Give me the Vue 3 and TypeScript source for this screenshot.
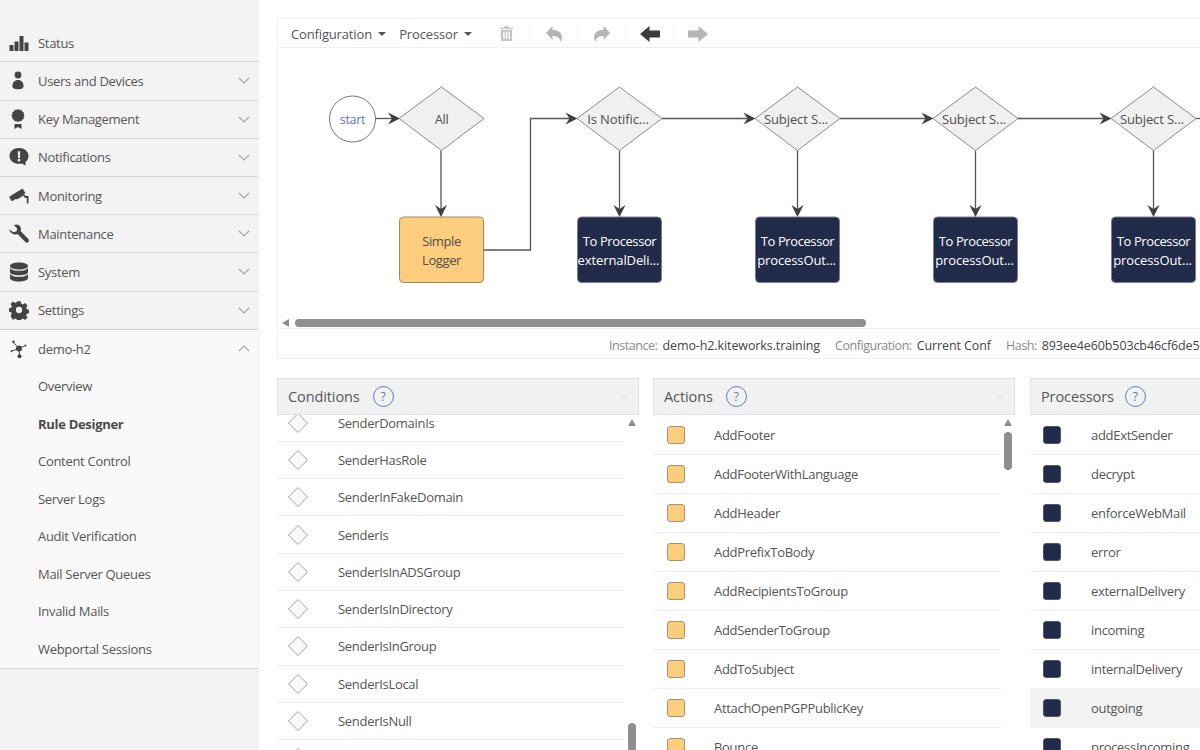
<script setup lang="ts">
interface NavItem {
  label: string;
  icon: string;
  chevron?: boolean;
}

const navItems: NavItem[] = [
  { label: 'Status', icon: 'status' },
  { label: 'Users and Devices', icon: 'user', chevron: true },
  { label: 'Key Management', icon: 'badge', chevron: true },
  { label: 'Notifications', icon: 'bubble', chevron: true },
  { label: 'Monitoring', icon: 'camera', chevron: true },
  { label: 'Maintenance', icon: 'wrench', chevron: true },
  { label: 'System', icon: 'database', chevron: true },
  { label: 'Settings', icon: 'gear', chevron: true },
];

const subItems = [
  'Overview',
  'Rule Designer',
  'Content Control',
  'Server Logs',
  'Audit Verification',
  'Mail Server Queues',
  'Invalid Mails',
  'Webportal Sessions',
];

const conditions = [
  'SenderDomainIs',
  'SenderHasRole',
  'SenderInFakeDomain',
  'SenderIs',
  'SenderIsInADSGroup',
  'SenderIsInDirectory',
  'SenderIsInGroup',
  'SenderIsLocal',
  'SenderIsNull',
  'SenderIsRegex',
];

const actions = [
  'AddFooter',
  'AddFooterWithLanguage',
  'AddHeader',
  'AddPrefixToBody',
  'AddRecipientsToGroup',
  'AddSenderToGroup',
  'AddToSubject',
  'AttachOpenPGPPublicKey',
  'Bounce',
];

const processors = [
  'addExtSender',
  'decrypt',
  'enforceWebMail',
  'error',
  'externalDelivery',
  'incoming',
  'internalDelivery',
  'outgoing',
  'processIncoming',
];

// diagram columns after the first one
const branches = [
  { x: 619.5, label: 'Is Notific...', target: 'externalDeli...' },
  { x: 797.5, label: 'Subject S...', target: 'processOut...' },
  { x: 975.5, label: 'Subject S...', target: 'processOut...' },
  { x: 1153.5, label: 'Subject S...', target: 'processOut...' },
];

const diamondPoints = (cx: number) =>
  `${cx - 42.5},118.5 ${cx},87 ${cx + 42.5},118.5 ${cx},150.5`;

const arrowHead = (x: number, y: number) =>
  `${x},${y} ${x - 12},${y - 6} ${x - 8},${y} ${x - 12},${y + 6}`;

const downHead = (x: number, y: number) =>
  `${x},${y} ${x - 6},${y - 12} ${x},${y - 8} ${x + 6},${y - 12}`;
</script>

<template>
  <div class="app">
    <aside class="sidebar">
      <nav class="nav">
        <div v-for="item in navItems" :key="item.label" class="nav-row">
          <svg class="nav-icon" viewBox="0 0 20 20" fill="#444">
            <template v-if="item.icon === 'status'">
              <rect x="0.5" y="12" width="4" height="6" />
              <rect x="5.5" y="8.5" width="4" height="9.5" />
              <rect x="10.5" y="3" width="4" height="15" />
              <rect x="15.5" y="9.5" width="4" height="8.5" />
            </template>
            <template v-else-if="item.icon === 'user'">
              <circle cx="9" cy="4" r="3.4" />
              <path d="M9 9c-3.400 0-5.600 2.600-5.600 6 0 2 1.600 3.300 5.600 3.300s5.600-1.300 5.600-3.300c0-3.400-2.200-6-5.600-6z" />
            </template>
            <template v-else-if="item.icon === 'badge'">
              <path d="M10 0l1.800 1.100 2.100-.2 1 1.900 1.900 1-.2 2.100 1.100 1.800-1.100 1.800.2 2.100-1.900 1-1 1.900-2.100-.2-1.800 1.100-1.800-1.100-2.100.2-1-1.900-1.900-1 .2-2.100-1.100-1.800 1.100-1.800-.2-2.100 1.900-1 1-1.900 2.100.2z" transform="translate(.5 0) scale(.85)" />
              <path d="M5.500 15h7v5l-3.500-2-3.500 2z" />
            </template>
            <template v-else-if="item.icon === 'bubble'">
              <path fill-rule="evenodd" d="M10 1c5.500 0 9.500 3.400 9.500 8 0 2.500-1.100 4.500-3 6v3.500L12.800 16.500c-.9.2-1.800.3-2.800.3C4.500 16.800.5 13.500.5 9S4.500 1 10 1zM8.800 4.200l.3 6.800h1.800l.3-6.800zM10 11.800a1.400 1.400 0 100 2.800 1.400 1.400 0 000-2.800z" />
            </template>
            <template v-else-if="item.icon === 'camera'">
              <path d="M.5 10.500L13.500 2.500l3 4.500L3.500 15 2 14.500l-1.500-3z" />
              <path d="M8 13.500l6.500-3.800 1.500 2.300h1.800v5.500h1.700v-7.500h-3L15 8 6.500 12.500z" />
            </template>
            <template v-else-if="item.icon === 'wrench'">
              <path d="M.6 5.200L4 8.200 7.400 7.600 8.200 4.400 5 1.200C7.800-.2 11 1 11.800 3.800c.3 1.200.2 2.300-.3 3.300l7.900 7.900c.8.900.8 2.200 0 3s-2.200.9-3 0L8.500 10c-1.300.7-2.800.8-4.200.2C1.900 9.200.4 7.600.6 5.200z" />
            </template>
            <template v-else-if="item.icon === 'database'">
              <path d="M10 .5c5 0 9 1.400 9 3.500S15 7.500 10 7.500 1 6.100 1 4 5 .5 10 .5z" />
              <path d="M1 6c1.400 2 5 2.800 9 2.800S17.600 8 19 6v4c0 2-4 3.300-9 3.300S1 12 1 10z" />
              <path d="M1 12c1.400 2 5 2.800 9 2.800s7.600-.8 9-2.800v4c0 2.100-4 3.500-9 3.500S1 18.100 1 16z" />
            </template>
            <template v-else-if="item.icon === 'gear'">
              <path fill-rule="evenodd" d="M8 .3h4l.6 2.800 1.700.7 2.400-1.500 2.800 2.800-1.500 2.400.7 1.700 2.800.6v3.700l-2.800.6-.7 1.700 1.500 2.400-2.800 2.800-2.400-1.500-1.700.7-.6 2.800H8l-.6-2.800-1.700-.7-2.400 1.500L.5 16.500 2 14.100l-.7-1.700-2.800-.6V8.100l2.800-.6.7-1.700L.5 3.400l2.800-2.800 2.400 1.500 1.700-.7zM10 6.500a3.500 3.500 0 100 7 3.500 3.500 0 000-7z" transform="translate(1 1) scale(.9)" />
            </template>
          </svg>
          <span class="nav-label">{{ item.label }}</span>
          <svg v-if="item.chevron" class="chevron" viewBox="0 0 12 7">
            <path d="M1 1l5 5 5-5" />
          </svg>
        </div>

        <div class="nav-group">
          <div class="nav-row nav-row--open">
            <svg class="nav-icon" viewBox="0 0 20 20" fill="#444" stroke="#444">
              <path d="M10 9.500L4.500 3.500M10 9.500L16.500 6.500M10 9.500L3 12M10 9.500L10.500 17" stroke-width="1" />
              <circle cx="10" cy="9.500" r="3" stroke="none" />
              <circle cx="4.500" cy="2.800" r="1.300" stroke="none" />
              <circle cx="16.500" cy="6.500" r="1" stroke="none" />
              <circle cx="2.500" cy="12.200" r="1" stroke="none" />
              <circle cx="10.500" cy="17.200" r="2" stroke="none" />
            </svg>
            <span class="nav-label">demo-h2</span>
            <svg class="chevron" viewBox="0 0 12 7">
              <path d="M1 6l5-5 5 5" />
            </svg>
          </div>
          <a
            v-for="sub in subItems"
            :key="sub"
            class="sub-item"
            :class="{ 'sub-item--active': sub === 'Rule Designer' }"
          >{{ sub }}</a>
        </div>
      </nav>
    </aside>

    <main class="main">
      <section class="designer">
        <div class="toolbar">
          <div class="menus">
            <span class="menu">Configuration <i class="caret"></i></span>
            <span class="menu">Processor <i class="caret"></i></span>
          </div>
          <button class="tool">
            <svg viewBox="0 0 14 16" width="13" height="15" fill="#c4c4c4">
              <path d="M5 0h4l.6 1.500H14V3H0V1.500h4.400z" />
              <path fill-rule="evenodd" d="M1 4h12v12H1zM3.500 6v8h1.500V6zm2.800 0v8h1.500V6zm2.800 0v8h1.500V6z" />
            </svg>
          </button>
          <button class="tool">
            <svg viewBox="0 0 16 16" width="16" height="16" fill="#b5b5b5">
              <path d="M6.500 0v3.800c5.500 0 9.500 3 9.500 7.500 0 1.900-.7 3.500-1.800 4.700.4-3.500-2.400-6-7.700-6V14L0 7z" />
            </svg>
          </button>
          <button class="tool">
            <svg viewBox="0 0 16 16" width="16" height="16" fill="#b5b5b5">
              <path d="M9.500 0v3.800C4 3.800 0 6.800 0 11.300 0 13.200.7 14.800 1.800 16c-.4-3.500 2.400-6 7.700-6V14L16 7z" />
            </svg>
          </button>
          <button class="tool">
            <svg viewBox="0 0 20 16" width="20" height="16" fill="#3c3c3c">
              <path d="M0 8l9.500-8v4.500H20v7H9.500V16z" />
            </svg>
          </button>
          <button class="tool tool--last">
            <svg viewBox="0 0 20 16" width="20" height="16" fill="#b5b5b5">
              <path d="M20 8l-9.500-8v4.500H0v7h10.500V16z" />
            </svg>
          </button>
        </div>

        <div class="canvas">
          <svg class="diagram" viewBox="278 48 922 266">
            <g class="links">
              <path d="M376 118.500H392" />
              <path d="M441 150.500V210" />
              <path d="M484 250H530.500V118.500H570" />
              <path v-for="(b, i) in branches.slice(0, 3)" :key="i" :d="`M${b.x + 42.5} 118.500H${branches[i + 1].x - 50}`" />
              <path d="M1196 118.500H1200" />
              <path v-for="b in branches" :key="b.x" :d="`M${b.x} 150.500V210`" />
            </g>
            <g fill="#3f3f3f">
              <polygon :points="arrowHead(400, 118.5)" />
              <polygon :points="downHead(441, 217)" />
              <polygon :points="arrowHead(577.5, 118.5)" />
              <polygon v-for="b in branches.slice(1)" :key="b.x" :points="arrowHead(b.x - 42, 118.5)" />
              <polygon v-for="b in branches" :key="b.x" :points="downHead(b.x, 217)" />
            </g>

            <circle class="start" cx="352.500" cy="119" r="23" />
            <text class="start-label" x="352.500" y="124">start</text>

            <polygon class="decision" :points="diamondPoints(441.5)" />
            <text class="node-text" x="441.500" y="123.500">All</text>

            <rect class="logger" x="399.500" y="217" width="84" height="65.500" rx="4" />
            <text class="node-text" x="441.500" y="246">Simple</text>
            <text class="node-text" x="441.500" y="265">Logger</text>

            <g v-for="b in branches" :key="b.x">
              <polygon class="decision" :points="diamondPoints(b.x)" />
              <text class="node-text node-text--wide" :x="b.x - 1.5" y="123.500">{{ b.label }}</text>
              <rect class="target" :x="b.x - 42" y="217" width="84" height="65.500" rx="4" />
              <text class="node-text node-text--light" :x="b.x" y="246">To Processor</text>
              <text class="node-text node-text--light node-text--wide" :x="b.x - 1" y="265">{{ b.target }}</text>
            </g>
          </svg>
          <div class="h-scroll">
            <i class="arrow-left"></i>
            <div class="h-thumb"></div>
          </div>
        </div>

        <div class="info">
          <span class="info-key">Instance:</span><span class="info-val">demo-h2.kiteworks.training</span>
          <span class="info-key">Configuration:</span><span class="info-val">Current Conf</span>
          <span class="info-key">Hash:</span><span class="info-val">893ee4e60b503cb46cf6de5e1a</span>
        </div>
      </section>

      <section class="panels">
        <div class="panel">
          <header class="panel-head">
            Conditions <span class="help">?</span>
            <svg class="chevron chevron--faint" viewBox="0 0 12 7"><path d="M1 1l5 5 5-5" /></svg>
          </header>
          <div class="panel-body">
            <ul class="list list--conditions">
              <li v-for="c in conditions" :key="c" class="row row--condition">
                <svg class="swatch-diamond" viewBox="0 0 22 22"><path d="M11 1.500L20.500 11 11 20.500 1.500 11z" /></svg>
                <span>{{ c }}</span>
              </li>
            </ul>
            <i class="arrow-up"></i>
            <div class="v-thumb v-thumb--low"></div>
          </div>
        </div>

        <div class="panel">
          <header class="panel-head">
            Actions <span class="help">?</span>
            <svg class="chevron chevron--faint" viewBox="0 0 12 7"><path d="M1 1l5 5 5-5" /></svg>
          </header>
          <div class="panel-body">
            <ul class="list">
              <li v-for="a in actions" :key="a" class="row">
                <i class="swatch swatch--action"></i>
                <span>{{ a }}</span>
              </li>
            </ul>
            <i class="arrow-up"></i>
            <div class="v-thumb"></div>
          </div>
        </div>

        <div class="panel panel--processors">
          <header class="panel-head">
            Processors <span class="help">?</span>
          </header>
          <div class="panel-body">
            <ul class="list list--full">
              <li
                v-for="p in processors"
                :key="p"
                class="row"
                :class="{ 'row--hover': p === 'outgoing' }"
              >
                <i class="swatch swatch--processor"></i>
                <span>{{ p }}</span>
              </li>
            </ul>
          </div>
        </div>
      </section>
    </main>
  </div>
</template>

<style>
html,
body {
  margin: 0;
  height: 100%;
  overflow: hidden;
}
</style>

<style scoped>
.app {
  display: flex;
  width: 1200px;
  height: 750px;
  overflow: hidden;
  background: #fff;
  color: #555;
  font-family: "Open Sans", "Liberation Sans", sans-serif;
  font-size: 13px;
  letter-spacing: -0.3px;
}

.sidebar {
  flex: 0 0 258px;
  background: #f3f3f3;
  box-shadow: 1px 0 1px rgba(0, 0, 0, 0.06);
  padding-top: 24.2px;
  box-sizing: border-box;
  position: relative;
  z-index: 1;
}

.nav-row {
  display: flex;
  align-items: center;
  height: 38.2px;
  box-sizing: border-box;
  border-bottom: 1px solid #d6d6d6;
  padding: 0 8px 0 9px;
}

.nav-row--open {
  height: 37.7px;
  border-bottom: 0;
}

.nav-icon {
  width: 20px;
  height: 20px;
  flex: none;
  margin-right: 9px;
}

.nav-label {
  flex: 1;
}

.chevron {
  width: 12px;
  height: 7px;
  fill: none;
  stroke: #a5a5a5;
  stroke-width: 1.2;
}

.chevron--faint {
  stroke: #e6e6e6;
  margin-left: auto;
  margin-right: 8px;
}

.nav-group {
  background: #f9f9f9;
  border-bottom: 1px solid #d6d6d6;
  padding-bottom: 1px;
}

.sub-item {
  display: flex;
  align-items: center;
  height: 37.5px;
  padding-left: 38px;
}

.sub-item--active {
  font-weight: 700;
  color: #4a4a4a;
}

.main {
  flex: 1;
  min-width: 0;
  overflow: hidden;
  padding: 18px 0 0 19px;
  box-sizing: border-box;
}

.designer {
  width: 1000px;
  height: 341px;
  box-sizing: border-box;
  border: 1px solid #f0f0f0;
  display: flex;
  flex-direction: column;
}

.toolbar {
  display: flex;
  align-items: center;
  height: 27px;
  padding-top: 1px;
  flex: none;
  border-bottom: 1px solid #f0f0f0;
}

.menus {
  display: flex;
  gap: 13px;
  width: 204px;
  padding-left: 13px;
  box-sizing: border-box;
  color: #555;
  letter-spacing: -0.15px;
}

.menu {
  white-space: nowrap;
}

.caret {
  display: inline-block;
  border-left: 4px solid transparent;
  border-right: 4px solid transparent;
  border-top: 4px solid #555;
  vertical-align: 3px;
  margin-left: 3px;
}

.tool {
  width: 48px;
  height: 27px;
  border: 0;
  background: none;
  padding: 0;
  display: flex;
  align-items: center;
  justify-content: center;
  position: relative;
}

.tool::after {
  content: "";
  position: absolute;
  right: 0;
  top: 2px;
  bottom: 2px;
  width: 1px;
  background: #f6f6f6;
}

.tool--last::after {
  display: none;
}

.canvas {
  position: relative;
  height: 280px;
  flex: none;
  border-bottom: 1px solid #f0f0f0;
  overflow: hidden;
}

.diagram {
  display: block;
  width: 922px;
  height: 266px;
}

.links path {
  fill: none;
  stroke: #555;
  stroke-width: 1.3;
}

.start {
  fill: #fff;
  stroke: #777;
}

.start-label {
  fill: #5b78b8;
  font-size: 12.500px;
  text-anchor: middle;
}

.decision {
  fill: #f0f0f0;
  stroke: #8c8c8c;
}

.logger {
  fill: #fdcd7e;
  stroke: #a08a60;
}

.target {
  fill: #222b4a;
  stroke: #7b7f8c;
}

.node-text {
  fill: #4f4f4f;
  font-size: 13px;
  letter-spacing: -0.4px;
  text-anchor: middle;
}

.node-text--wide {
  letter-spacing: -0.1px;
}

.node-text--light {
  fill: #fff;
}

.h-scroll {
  display: flex;
  align-items: center;
  gap: 5px;
  height: 8px;
  padding-left: 4px;
  margin-top: 5px;
}

.arrow-left {
  border-top: 4.500px solid transparent;
  border-bottom: 4.500px solid transparent;
  border-right: 7px solid #8d8d8d;
}

.h-thumb {
  width: 571px;
  height: 8px;
  margin-left: 1px;
  background: #8f8f8f;
  border-radius: 4px;
}

.info {
  display: flex;
  align-items: center;
  flex: 1;
  white-space: nowrap;
  padding: 3px 0 0 331px;
  font-size: 12.500px;
  letter-spacing: -0.1px;
  color: #444;
}

.info-key {
  color: #8a8a8a;
  margin-right: 5px;
  letter-spacing: -0.45px;
}

.info-val {
  margin-right: 15px;
}

.panels {
  display: flex;
  gap: 14px;
  margin-top: 19px;
  width: 1120px;
}

.panel {
  flex: 0 0 362px;
  display: flex;
  flex-direction: column;
  height: 372px;
  min-width: 0;
}

.panel--processors {
  margin-left: 1px;
}

.panel--processors .panel-head {
  gap: 11px;
}

.panel--processors .row {
  padding-left: 13px;
  gap: 30px;
}

.panel-head {
  display: flex;
  align-items: center;
  gap: 13px;
  height: 37px;
  flex: none;
  box-sizing: border-box;
  padding-left: 10px;
  background: #f1f1f1;
  border: 1px solid #e2e2e2;
  font-size: 14.500px;
  letter-spacing: -0.1px;
  color: #555;
  position: relative;
  z-index: 1;
}

.help {
  width: 19px;
  height: 19px;
  border: 1px solid #5b78c0;
  border-radius: 50%;
  color: #5b78c0;
  font-size: 12px;
  display: flex;
  align-items: center;
  justify-content: center;
}

.panel-body {
  position: relative;
  flex: 1;
  min-height: 0;
  overflow: hidden;
}

.list {
  list-style: none;
  margin: 1px 0 0;
  padding: 0;
  width: 348px;
}

.list--conditions {
  margin-top: -10.500px;
}

.list--full {
  width: auto;
}

.row {
  display: flex;
  align-items: center;
  height: 39px;
  box-sizing: border-box;
  border-bottom: 1px solid #f0f0f0;
  padding-left: 13.500px;
  gap: 29.500px;
}

.row--condition {
  height: 37.300px;
  padding-left: 10px;
  gap: 29px;
}

.row--hover {
  background: #f2f2f2;
}

.swatch {
  width: 18px;
  height: 18px;
  border-radius: 3px;
  box-sizing: border-box;
  flex: none;
}

.swatch--action {
  background: #fdcd7e;
  border: 1px solid #a9946c;
}

.swatch--processor {
  background: #222b4a;
  border: 1px solid #50566b;
}

.swatch-diamond {
  width: 22px;
  height: 22px;
  flex: none;
  fill: #fafafa;
  stroke: #a0a0a0;
}

.arrow-up {
  position: absolute;
  top: 4px;
  right: 3px;
  border-left: 4.500px solid transparent;
  border-right: 4.500px solid transparent;
  border-bottom: 7px solid #8d8d8d;
}

.v-thumb {
  position: absolute;
  top: 17px;
  right: 3px;
  width: 8px;
  height: 38px;
  background: #8f8f8f;
  border-radius: 4px;
}

.v-thumb--low {
  top: 308px;
  height: 60px;
}
</style>
